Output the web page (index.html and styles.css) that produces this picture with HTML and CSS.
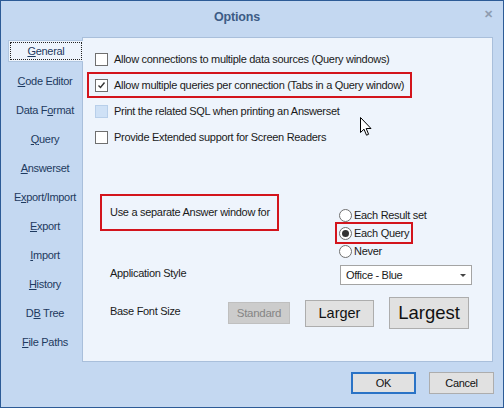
FILE: index.html
```html
<!DOCTYPE html>
<html>
<head>
<meta charset="utf-8">
<link rel="stylesheet" href="styles.css">
</head>
<body>
<div class="window">
  <div class="titlebar">
    <span class="title">Options</span>
    <span class="close">&#x2715;</span>
  </div>
  <div class="main">
    <ul class="tabs">
      <li class="tab active"><span class="focus"><span><u>G</u>eneral</span></span></li>
      <li class="tab"><span><u>C</u>ode Editor</span></li>
      <li class="tab"><span>Data F<u>o</u>rmat</span></li>
      <li class="tab"><span><u>Q</u>uery</span></li>
      <li class="tab"><span><u>A</u>nswerset</span></li>
      <li class="tab"><span>E<u>x</u>port/Import</span></li>
      <li class="tab"><span><u>E</u>xport</span></li>
      <li class="tab"><span><u>I</u>mport</span></li>
      <li class="tab"><span><u>H</u>istory</span></li>
      <li class="tab"><span>D<u>B</u> Tree</span></li>
      <li class="tab"><span><u>F</u>ile Paths</span></li>
    </ul>
    <div class="panel">
      <div class="checks">
        <div class="row"><span class="cb"></span><span>Allow connections to multiple data sources (Query windows)</span></div>
        <div class="row hl"><span class="cb checked"><svg width="11" height="11" viewBox="0 0 11 11"><path d="M2.5 5.5 L4.5 7.5 L8.5 2.5" fill="none" stroke="#333" stroke-width="1.4"/></svg></span><span>Allow multiple queries per connection (Tabs in a Query window)</span></div>
        <div class="row"><span class="cb disabled"></span><span>Print the related SQL when printing an Answerset</span></div>
        <div class="row"><span class="cb"></span><span>Provide Extended support for Screen Readers</span></div>
      </div>
      <div class="answer-row">
        <div class="answer-box">Use a separate Answer window for</div>
        <div class="radios">
          <div class="radio"><span class="rb"></span><span>Each Result set</span></div>
          <div class="radio hl"><span class="rb on"></span><span>Each Query</span></div>
          <div class="radio"><span class="rb"></span><span>Never</span></div>
        </div>
      </div>
      <div class="style-row">
        <span class="label">Application Style</span>
        <div class="select"><span>Office - Blue</span><span class="arrow"></span></div>
      </div>
      <div class="font-row">
        <span class="label">Base Font Size</span>
        <span class="btn std">Standard</span>
        <span class="btn larger">Larger</span>
        <span class="btn largest">Largest</span>
      </div>
      <svg class="cursor" width="13" height="20" viewBox="0 0 13 20"><path d="M0.5 0.5 L0.5 15.5 L4 12.2 L6.5 18.2 L8.6 17.3 L6.2 11.5 L11 11.5 Z" fill="#fff" stroke="#000" stroke-width="1" stroke-linejoin="miter"/></svg>
    </div>
  </div>
  <div class="footer">
    <span class="btn ok">OK</span>
    <span class="btn cancel">Cancel</span>
  </div>
</div>
</body>
</html>
```
FILE: styles.css
```css
* { box-sizing: border-box; }
html, body { margin: 0; padding: 0; }
body {
  font-family: "Liberation Sans", Arial, sans-serif;
  font-size: 11px;
  letter-spacing: -0.3px;
  color: #1a1a1a;
  white-space: nowrap;
}
.window {
  width: 504px;
  height: 408px;
  border: 1px solid #2d5b96;
  background: #c4d8f1;
  display: flex;
  flex-direction: column;
}
.titlebar {
  height: 36px;
  position: relative;
  display: flex;
  justify-content: center;
  align-items: flex-start;
  padding-top: 9px;
}
.title {
  font-weight: bold;
  font-size: 12.5px;
  letter-spacing: -0.2px;
  color: #3d5c86;
  margin-left: -30px;
}
.close {
  position: absolute;
  right: 10px;
  top: 7px;
  font-size: 11px;
  color: #8e9cb0;
  font-weight: bold;
}
.main {
  display: flex;
  height: 325px;
}
.tabs {
  list-style: none;
  margin: 0;
  padding: 0 0 0 7px;
  width: 81px;
}
.tab {
  height: 29px;
  display: flex;
  align-items: center;
  justify-content: center;
  color: #1e3a60;
}
.tab.active {
  margin-top: 3px;
  height: 22px;
  margin-bottom: 4px;
  background: #eef4fc;
  border: 1px solid #b0c6e0;
  border-right: none;
  margin-right: -1px;
  position: relative;
  z-index: 1;
  padding: 1px;
}
.tab.active .focus {
  width: 100%;
  height: 100%;
  border: 1px dotted #222;
  display: flex;
  align-items: center;
  justify-content: center;
}
.panel {
  width: 411px;
  height: 325px;
  background: #eef4fc;
  border: 1px solid #a9bfdb;
  position: relative;
}
.checks {
  margin-top: 8px;
  padding-left: 12px;
}
.row {
  height: 26px;
  display: flex;
  align-items: center;
  gap: 6px;
}
.row.hl {
  border: 2px solid #d3141c;
  margin-left: -8px;
  padding-left: 6px;
  width: 325px;
}
.cb {
  width: 13px;
  height: 13px;
  border: 1px solid #6f6f6f;
  background: #fff;
  display: inline-flex;
  align-items: center;
  justify-content: center;
  flex: none;
}
.cb.disabled { background: #cfe1f6; border-color: #b8cfea; }
.answer-row {
  display: flex;
  margin-top: 44px;
  padding-left: 17px;
}
.answer-box {
  width: 179px;
  height: 37px;
  border: 2px solid #d3141c;
  display: flex;
  align-items: center;
  padding-left: 8px;
  padding-bottom: 1px;
}
.radios {
  margin-left: 60px;
  margin-top: 12px;
}
.radio {
  height: 18px;
  display: flex;
  align-items: center;
  gap: 2px;
}
.radio.hl {
  border: 2px solid #d3141c;
  height: 22px;
  margin: -2px 0 -2px -4px;
  padding-left: 2px;
  width: 78px;
}
.rb {
  width: 13px;
  height: 13px;
  border-radius: 50%;
  border: 1px solid #6f6f6f;
  background: #fff;
  display: inline-flex;
  align-items: center;
  justify-content: center;
  flex: none;
}
.rb.on::after {
  content: "";
  width: 7px;
  height: 7px;
  border-radius: 50%;
  background: #333;
}
.style-row {
  display: flex;
  margin-top: 5px;
  padding-left: 27px;
}
.style-row .label { width: 230px; padding-top: 2px; }
.select {
  width: 132px;
  height: 20px;
  border: 1px solid #a4a4a4;
  background: #fff;
  display: flex;
  align-items: center;
  justify-content: space-between;
  padding: 0 5px;
}
.arrow {
  width: 0;
  height: 0;
  border-left: 3px solid transparent;
  border-right: 3px solid transparent;
  border-top: 3px solid #444;
}
.font-row {
  display: flex;
  align-items: center;
  margin-top: 12px;
  padding-left: 27px;
}
.font-row .label {
  width: 118px;
  align-self: flex-start;
  margin-top: 8px;
}
.btn {
  display: inline-flex;
  align-items: center;
  justify-content: center;
  background: #e1e1e1;
  border: 1px solid #adadad;
  color: #111;
}
.std {
  width: 62px;
  height: 22px;
  background: #cccccc;
  border-color: #bfbfbf;
  color: #858585;
  font-size: 11.5px;
}
.larger {
  width: 69px;
  height: 27px;
  margin-left: 15px;
  font-size: 14.5px;
  letter-spacing: 0;
}
.largest {
  width: 80px;
  height: 32px;
  margin-left: 15px;
  font-size: 18.5px;
  letter-spacing: 0;
}
.cursor {
  position: absolute;
  left: 277px;
  top: 79px;
}
.footer {
  display: flex;
  justify-content: flex-end;
  padding-top: 10px;
  padding-right: 9px;
  gap: 13px;
}
.ok {
  width: 65px;
  height: 22px;
  border: 2px solid #2a73c6;
}
.cancel {
  width: 65px;
  height: 22px;
}
```
